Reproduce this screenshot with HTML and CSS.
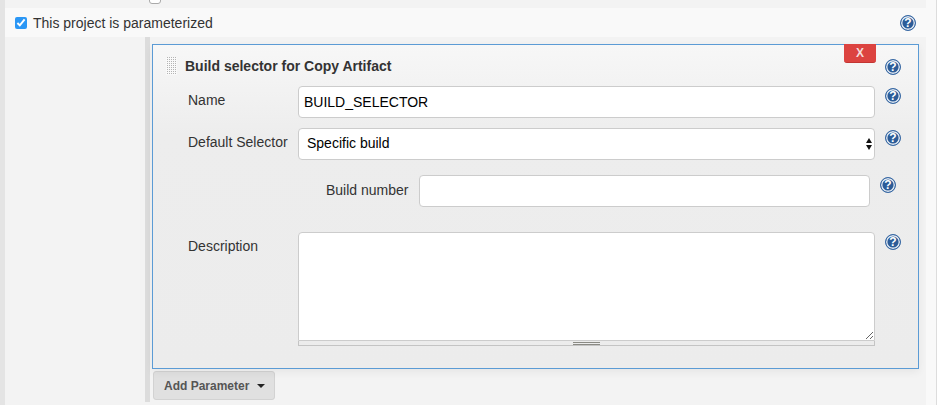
FILE: index.html
```html
<!DOCTYPE html>
<html>
  <head>
    <title>Project configuration</title>
    <link rel="stylesheet" href="styles.css">
  </head>
  <body>
    <div class="page">
      <div class="top-strip"><span class="cut-check"></span></div>

      <div class="param-row">
        <label class="check-label">
          <input type="checkbox" class="check" checked>
          This project is parameterized
        </label>
        <span class="help">?</span>
      </div>

      <div class="section">
        <div class="section-inner">
          <div class="block">
            <button class="delete">X</button>

            <div class="block-head">
              <span class="handle"></span>
              <strong>Build selector for Copy Artifact</strong>
              <span class="help">?</span>
            </div>

            <div class="form-row row-name">
              <label>Name</label>
              <input type="text" class="field" value="BUILD_SELECTOR">
              <span class="help">?</span>
            </div>

            <div class="form-row row-selector">
              <label>Default Selector</label>
              <div class="select-wrap">
                <select class="field">
                  <option>Specific build</option>
                </select>
              </div>
              <span class="help">?</span>
            </div>

            <div class="sub-row">
              <label>Build number</label>
              <input type="text" class="field">
              <span class="help">?</span>
            </div>

            <div class="form-row row-desc">
              <label>Description</label>
              <div>
                <textarea class="field"></textarea>
                <div class="grip"><span></span></div>
              </div>
              <span class="help">?</span>
            </div>
          </div>

          <button class="add-param">Add Parameter <span class="caret"></span></button>
        </div>
      </div>
    </div>
  </body>
</html>
```

FILE: styles.css
```css
* {
  box-sizing: border-box;
}

html, body {
  height: 100%;
}

body {
  background-color: #fff;
  color: #333;
  font-family: "Liberation Sans", Arial, sans-serif;
  font-size: 14px;
  margin: 0;
  overflow: hidden;
}

.page {
  background-color: #f9f9f9;
  border-left: 5px solid #e4e4e4;
  border-right: 1px solid #ddd;
  height: 405px;
  padding-right: 10px;
  width: 937px;
}

.top-strip {
  background-color: #f3f3f3;
  height: 8px;
  overflow: hidden;
  padding-left: 144px;
}

.cut-check {
  background-color: #fff;
  border: 1px solid #aaa;
  border-radius: 3px;
  display: block;
  height: 12px;
  margin-top: -8px;
  width: 12px;
}

.param-row {
  align-items: center;
  background-color: #f9f9f9;
  display: flex;
  height: 29px;
  justify-content: space-between;
  padding-left: 10px;
  padding-right: 10px;
}

.check-label {
  align-items: center;
  display: flex;
}

.check {
  accent-color: #2b97f5;
  height: 12px;
  margin: 0 6px 0 0;
  width: 12px;
}

/* help icon: dark ring, pale ring, dark centre */
.help {
  background-color: #2c5c98;
  border: 1px solid #3a6aa5;
  border-radius: 50%;
  box-shadow: inset 0 0 0 1.4px #e4ebf3;
  color: #fff;
  display: block;
  flex: none;
  font-size: 12px;
  font-weight: bold;
  height: 16px;
  line-height: 14px;
  text-align: center;
  width: 16px;
}

.section {
  background-color: #f3f3f3;
  height: 368px;
  padding-left: 140px;
}

.section-inner {
  border-left: 5px solid #dcdcdc;
  height: 365px;
  padding: 7px 0 0 2px;
}

.block {
  background: linear-gradient(#f7f7f7, #ededed 90px, #ececec);
  border: 1px solid #5b9bd5;
  box-shadow: 0 3px 8px rgba(0, 0, 0, 0.06);
  height: 325px;
  position: relative;
  width: 767px;
}

.delete {
  background-color: #dc4340;
  border: 0;
  border-bottom: 1px solid #c23532;
  border-radius: 0 0 3px 3px;
  color: #f5dcdb;
  font-family: "Liberation Sans", Arial, sans-serif;
  font-size: 12px;
  font-weight: bold;
  height: 19px;
  padding: 0;
  position: absolute;
  right: 42px;
  top: -1px;
  width: 32px;
}

.block-head {
  align-items: center;
  display: flex;
  height: 41px;
  padding-left: 13px;
}

.block-head strong {
  flex: 1;
  font-size: 14px;
  margin-left: 8px;
  margin-top: 1px;
}

.block-head .help {
  margin: 3px 17px 0 0;
}

.handle {
  background-color: #f9f9f9;
  background-image: conic-gradient(#b4b4b4 25%, transparent 0);
  background-size: 2px 2px;
  height: 18px;
  width: 11px;
}

.form-row {
  display: grid;
  grid-template-columns: 110px 577px 26px;
  padding-left: 35px;
}

.form-row .help {
  margin: 2px 0 0 10px;
}

.form-row label {
  padding-top: 6px;
}

.row-selector {
  margin-top: 10px;
}

.row-desc {
  margin-top: 25px;
}

.field {
  background-color: #fff;
  border: 1px solid #ccc;
  border-radius: 4px;
  color: #000;
  display: block;
  font-family: "Liberation Sans", Arial, sans-serif;
  font-size: 14px;
  height: 32px;
  outline: 0;
  padding: 0 5px;
  width: 100%;
}

select.field {
  appearance: none;
  padding: 0 0 2px 8px;
}

.select-wrap {
  position: relative;
}

.select-wrap::before,
.select-wrap::after {
  border-left: 3.5px solid transparent;
  border-right: 3.5px solid transparent;
  content: "";
  position: absolute;
  right: 3px;
}

.select-wrap::before {
  border-bottom: 5px solid #111;
  top: 10px;
}

.select-wrap::after {
  border-top: 5px solid #111;
  top: 17px;
}

.sub-row {
  display: flex;
  margin-top: 15px;
  padding-left: 173px;
}

.sub-row label {
  padding-top: 7px;
  width: 93px;
}

.sub-row .field {
  width: 451px;
}

.sub-row .help {
  margin: 2px 0 0 10px;
}

textarea.field {
  border-radius: 4px 4px 0 0;
  height: 109px;
  resize: vertical;
}

.grip {
  align-items: center;
  border: 1px solid #c4c4c4;
  border-top: 0;
  display: flex;
  height: 5px;
  justify-content: center;
}

.grip span {
  border-bottom: 1px solid #8a8a84;
  border-top: 1px solid #8a8a84;
  display: block;
  height: 3px;
  width: 27px;
}

.add-param {
  align-items: center;
  background-color: #e0e0e0;
  border: 1px solid #d2d2d2;
  border-radius: 3px;
  color: #555;
  display: flex;
  font-family: "Liberation Sans", Arial, sans-serif;
  font-size: 12px;
  font-weight: bold;
  height: 29px;
  margin: 2px 0 0 1px;
  padding: 0 0 0 10px;
  width: 122px;
}

.caret {
  border-left: 4px solid transparent;
  border-right: 4px solid transparent;
  border-top: 4px solid #222;
  margin-left: 8px;
}
```
